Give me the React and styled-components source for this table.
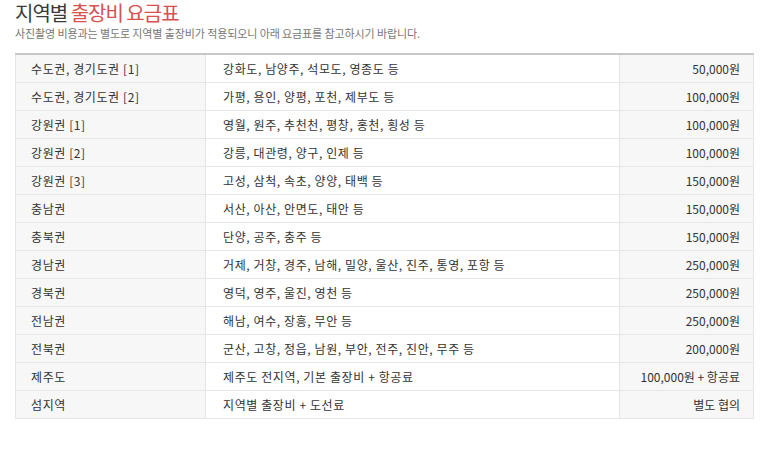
import React from 'react'
import styled, {createGlobalStyle} from 'styled-components'

const Global = createGlobalStyle `
    body {
        margin: 0;
        background: #fff;
        font-family: "Noto Sans CJK KR", "Noto Sans", sans-serif;
        color: #333;
    }
`

const Wrap = styled.div `
    padding: 2px 15px 0;
    width: 739px;
`

const Title = styled.h2 `
    margin: 0;
    font-size: 20px;
    line-height: 21px;
    font-weight: 400;
    color: #3a3a3a;
    letter-spacing: -1px;

    em {
        font-style: normal;
        color: #d9504d;
    }
`

const Sub = styled.p `
    margin: 3px 0 13px;
    font-size: 11px;
    line-height: 14px;
    color: #777;
    letter-spacing: -0.1px;
`

const Table = styled.table `
    width: 100%;
    border-collapse: collapse;
    border-top: 2px solid #c8c8c8;
    font-size: 12px;
    color: #333;
`

const Cell = styled.td `
    height: 27px;
    padding: 0 ${props => props.right ? '13px' : '15px'} 0 ${props => props.mid ? '17px' : '15px'};
    border: 1px solid #e6e6e6;
    background: ${props => props.mid ? '#fff' : '#f7f7f7'};
    text-align: ${props => props.right ? 'right' : 'left'};
    white-space: nowrap;
    line-height: 14px;
    letter-spacing: ${props => props.right ? '0' : '0.6px'};
`

const rows = [
    ['수도권, 경기도권 [1]', '강화도, 남양주, 석모도, 영종도 등', '50,000원'],
    ['수도권, 경기도권 [2]', '가평, 용인, 양평, 포천, 제부도 등', '100,000원'],
    ['강원권 [1]', '영월, 원주, 추천천, 평창, 홍천, 횡성 등', '100,000원'],
    ['강원권 [2]', '강릉, 대관령, 양구, 인제 등', '100,000원'],
    ['강원권 [3]', '고성, 삼척, 속초, 양양, 태백 등', '150,000원'],
    ['충남권', '서산, 아산, 안면도, 태안 등', '150,000원'],
    ['충북권', '단양, 공주, 충주 등', '150,000원'],
    ['경남권', '거제, 거창, 경주, 남해, 밀양, 울산, 진주, 통영, 포항 등', '250,000원'],
    ['경북권', '영덕, 영주, 울진, 영천 등', '250,000원'],
    ['전남권', '해남, 여수, 장흥, 무안 등', '250,000원'],
    ['전북권', '군산, 고창, 정읍, 남원, 부안, 전주, 진안, 무주 등', '200,000원'],
    ['제주도', '제주도 전지역, 기본 출장비 + 항공료', '100,000원 + 항공료'],
    ['섬지역', '지역별 출장비 + 도선료', '별도 협의']
]

function App() {
    return (
        <Wrap>
            <Global />
            <Title>지역별 <em>출장비 요금표</em></Title>
            <Sub>사진촬영 비용과는 별도로 지역별 출장비가 적용되오니 아래 요금표를 참고하시기 바랍니다.</Sub>
            <Table>
                <colgroup>
                    <col style={{width: '190px'}} />
                    <col style={{width: '414px'}} />
                    <col />
                </colgroup>
                <tbody>
                    {rows.map((r, i) => (
                        <tr key={i}>
                            <Cell>{r[0]}</Cell>
                            <Cell mid>{r[1]}</Cell>
                            <Cell right>{r[2]}</Cell>
                        </tr>
                    ))}
                </tbody>
            </Table>
        </Wrap>
    )
}

export default App
